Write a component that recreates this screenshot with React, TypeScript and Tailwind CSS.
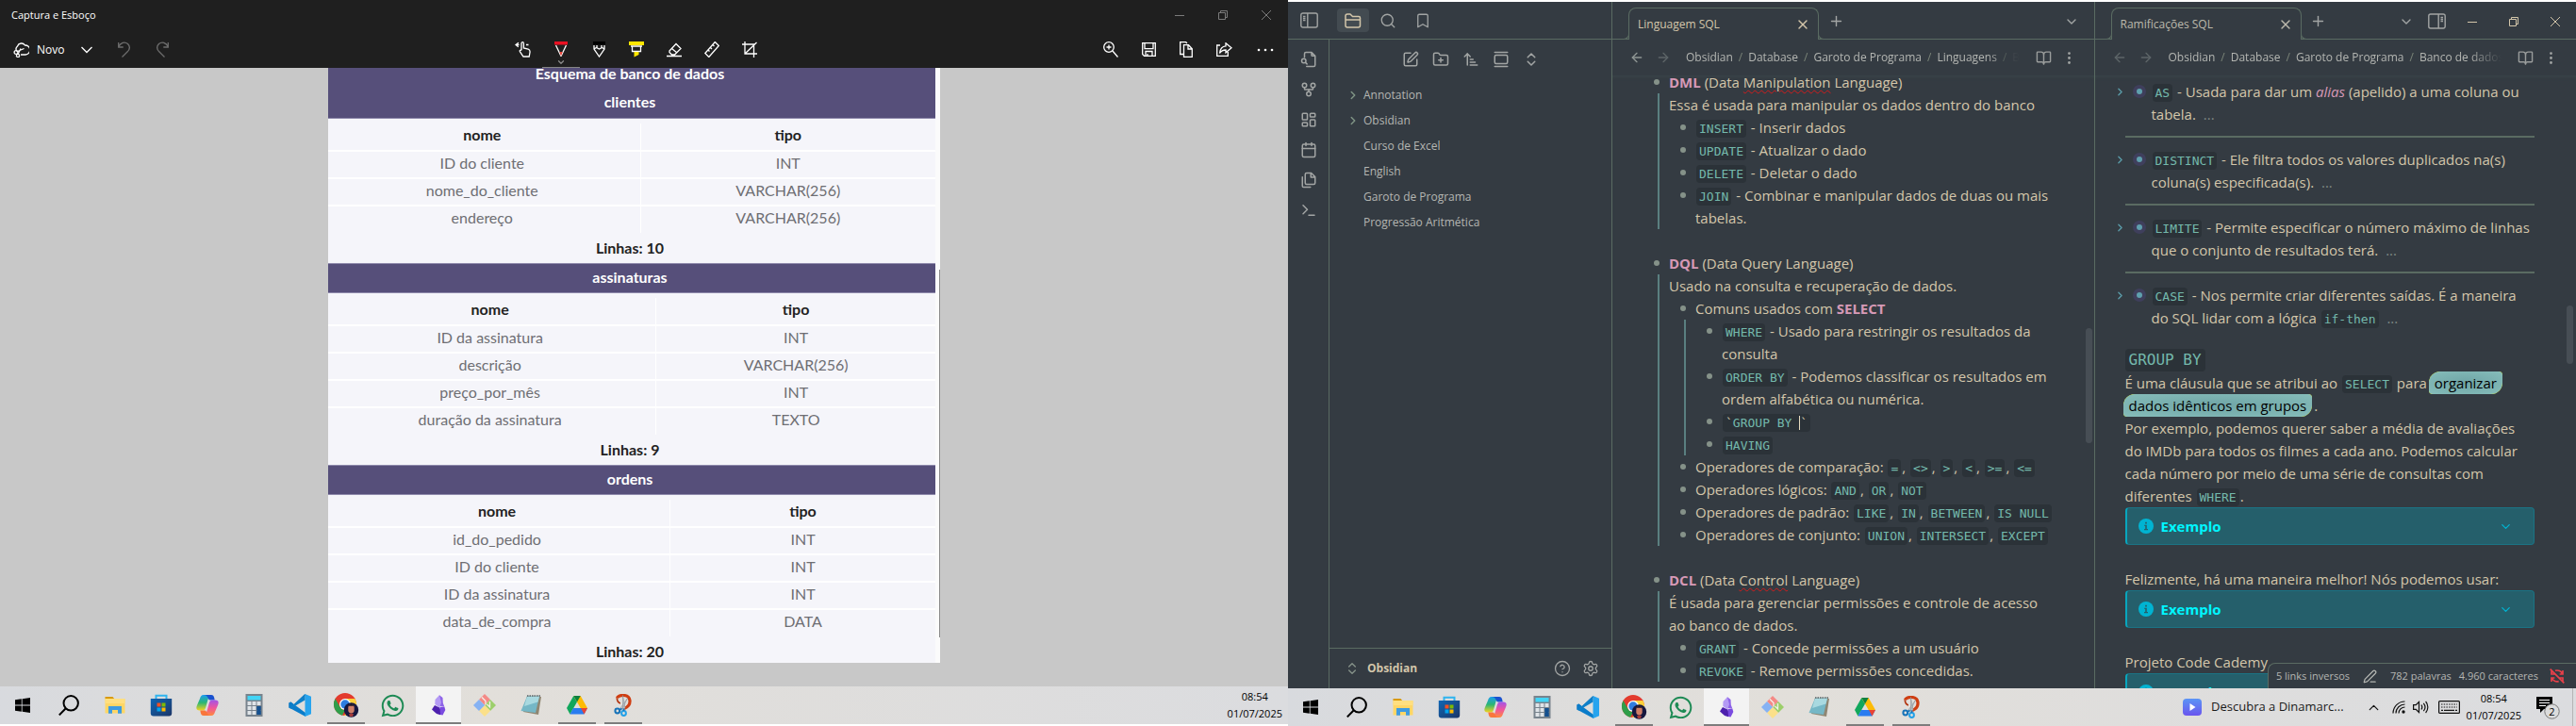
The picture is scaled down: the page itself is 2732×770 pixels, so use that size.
import React from "react";
import {
  ArrowLeft, ArrowRight, ArrowUpNarrowWide, BookOpen, Bookmark, Calendar, ChevronDown, ChevronRight, ChevronUp,
  ChevronsUpDown, CircleHelp, EllipsisVertical, FolderPlus, GalleryVertical, GitFork,
  LayoutDashboard, PenLine, Plus, Search, Settings, SquarePen, Terminal, X,
} from "lucide-react";
import { FaWhatsapp } from "react-icons/fa";

type Kids = { children?: React.ReactNode };

/* ---------- shared ---------- */

function IconButton({ label, className = "", children }: Kids & { label: string; className?: string }) {
  return (
    <button type="button" aria-label={label} className={`flex shrink-0 items-center justify-center ${className}`}>
      {children}
    </button>
  );
}

/* ---------- taskbar ---------- */

const WindowsLogo = () => (
  <svg width="16" height="16" viewBox="0 0 16 16" fill="#000">
    <path d="M0 2.3 6.8 1.3V7.6H0zM7.6 1.2 16 0V7.6H7.6zM0 8.4H6.8V14.7L0 13.7zM7.6 8.4H16V16L7.6 14.8z" />
  </svg>
);
const SearchGlyph = () => (
  <svg width="22" height="22" viewBox="0 0 22 22" fill="none" stroke="#000" strokeWidth="2">
    <circle cx="13.2" cy="8.8" r="7.7" />
    <path d="M7.8 14.2 .8 21.4" />
  </svg>
);
const Explorer = () => (
  <svg width="22" height="20" viewBox="0 0 22 20">
    <path d="M.5 1h8l2 2.500H.5z" fill="#d99a0b" />
    <path d="M.5 3h21v15.500H.5z" fill="#ffd666" />
    <path d="M.5 3h21v5H.5z" fill="#ffdf80" />
    <path d="M4 18.800V11h14v7.800h-4V15H8v3.800z" fill="#3f9be0" />
  </svg>
);
const Store = () => (
  <svg width="24" height="24" viewBox="0 0 24 24">
    <path d="M6.500 6V1.800h11V6" fill="none" stroke="#2fb4ef" strokeWidth="2" />
    <defs>
      <linearGradient id="store" x1="0" y1="0" x2="1" y2="1">
        <stop offset="0" stopColor="#0f66b5" />
        <stop offset="1" stopColor="#1d3667" />
      </linearGradient>
    </defs>
    <path d="M.8 5h22.400v15.500a3 3 0 0 1-3 3H3.800a3 3 0 0 1-3-3z" fill="url(#store)" />
    <path d="M7.500 9.500h4v4h-4z" fill="#f25022" />
    <path d="M12.500 9.500h4v4h-4z" fill="#7fba00" />
    <path d="M7.500 14.500h4v4h-4z" fill="#00a4ef" />
    <path d="M12.500 14.500h4v4h-4z" fill="#ffb900" />
  </svg>
);
const Copilot = () => (
  <svg width="24" height="22" viewBox="0 0 24 22">
    <defs>
      <linearGradient id="cpA" x1="0" y1="0" x2="0" y2="1">
        <stop offset="0" stopColor="#1b9df0" />
        <stop offset=".5" stopColor="#2bb673" />
        <stop offset="1" stopColor="#f4d31f" />
      </linearGradient>
      <linearGradient id="cpB" x1="0" y1="0" x2="0" y2="1">
        <stop offset="0" stopColor="#a154e8" />
        <stop offset=".5" stopColor="#f0569b" />
        <stop offset="1" stopColor="#ff8a3c" />
      </linearGradient>
    </defs>
    <path d="M16 0h-8C5.500 0 4.600 2 4 4L1 11c-1.500 3.500-.4 5.500 2.600 5.500H7c2 0 2.600-1.500 3.200-3.300L12.500 5c.6-2 1.400-3 3.500-3z" fill="url(#cpA)" />
    <path d="M8 0h8c2 0 2.700 1.200 3.200 3l.5 2.500h-5C12.500 5.500 13 0 8 0z" fill="#1a52cf" />
    <path d="M8 22h8c2.500 0 3.400-2 4-4l3-7c1.500-3.500.4-5.500-2.600-5.500H17c-2 0-2.600 1.500-3.200 3.300L11.500 17c-.6 2-1.400 3-3.500 3z" fill="url(#cpB)" />
    <path d="M16 22H8c-2 0-2.700-1.200-3.200-3l-.5-2.500h5C11.500 16.500 11 22 16 22z" fill="#f9763c" />
  </svg>
);
const Calc = () => (
  <svg width="19" height="24" viewBox="0 0 19 24">
    <path d="M.5 0h18v24H.5z" fill="#78838d" />
    <path d="M2.500 2h14v4.500h-14z" fill="#42d4f5" />
    {[8, 13, 18].map((y) =>
      [2.5, 7.5, 12.5].map((x) => (
        <rect key={`${x}-${y}`} x={x} y={y} width="4" height="4" fill={x > 12 && y > 12 ? "#14508f" : "#dfe4e8"} />
      )),
    )}
    <path d="M12.500 13h4v9h-4z" fill="#14508f" />
  </svg>
);
const VsCode = () => (
  <svg width="24" height="24" viewBox="0 0 24 24">
    <path d="M17.500 0 5.800 11.200 2.300 8.400.5 9.400v5.200l1.800 1L17.500 2z" fill="#0b6fb8" />
    <path d="M.5 9.400 2.300 8.400 18 20v4L.5 14.600z" fill="#0b7cc9" />
    <path d="M17.500 0 24 2.800v18.400L17.500 24z" fill="#27a4ee" />
    <path d="M17.500 0 4 12.600l-3.500 2 1.800 1L17.500 6.500z" fill="#0f80c8" />
  </svg>
);
const Chrome = () => (
  <svg width="28" height="26" viewBox="0 0 28 26">
    <circle cx="13" cy="12" r="12" fill="#e33b2e" />
    <path d="M2.600 6 8 15.400a6 6 0 0 0 5 2.600L10 23.700A12 12 0 0 1 2.600 6z" fill="#2f9e4a" />
    <path d="M13 6h10.400A12 12 0 0 1 12 24l6.200-9z" fill="#fdd13a" />
    <circle cx="13" cy="12" r="6" fill="#fff" />
    <circle cx="13" cy="12" r="4.700" fill="#2f7de0" />
    <circle cx="19.500" cy="18" r="7.700" fill="#15173f" />
    <path d="M16.300 14.500c0-3 6.400-3 6.400 0v4c0 4-6.400 4-6.400 0z" fill="#d07f68" />
    <path d="M16 15c0-4 7-4 7 0l-1-1.200h-5z" fill="#1a1424" />
    <path d="M17 22.500c1.500-1.500 3.500-1.500 5 0l-1 2.500h-3z" fill="#a33b3b" />
  </svg>
);
const ObsidianGem = () => (
  <svg width="17" height="22" viewBox="0 0 17 22">
    <path d="M9 .3 12.500 3l.3 5.500 1.500 4-4.800-.5L6 9z" fill="#8e63e8" />
    <path d="M9 .3 4.500 5 4.300 10l5 3.500L11 8z" fill="#b49af5" />
    <path d="M4 11 1 15.500l5 4.500 4 1.300c1-3 .5-5.300-.8-7.800z" fill="#4d20ae" />
    <path d="m9.500 13 4.800-.5 1 3.500-2.800 5.500-2.500-.5z" fill="#7a4be0" />
  </svg>
);
const GitBlocks = () => (
  <svg width="24" height="24" viewBox="0 0 24 24">
    <path d="m12 0 6 6-6 6-6-6z" fill="#f48a86" />
    <path d="m18 6 6 6-6 6-6-6z" fill="#9ccf6b" />
    <path d="m12 12 6 6-6 6-6-6z" fill="#fbe08a" />
    <path d="m6 6 6 6-6 6-6-6z" fill="#86b2f3" />
    <path d="m9 3.500 4 4v4M17.500 8v6l-3-3" fill="none" stroke="#f2efe9" strokeWidth="1.300" />
  </svg>
);
const Notepad = () => (
  <svg width="23" height="22" viewBox="0 0 23 22">
    <path d="m7 1 15 1-3 19-16-3z" fill="#8f8672" />
    <path d="M7 1.500h13L16 19 .5 17z" fill="#75b7c6" />
    <path d="M7 1.500h13l-1.500 6L4 12z" fill="#a9d9e0" />
    <path d="M7 1h14" stroke="#5a6266" strokeWidth="1.500" strokeDasharray="1.500 1" />
  </svg>
);
const Drive = () => (
  <svg width="22" height="20" viewBox="0 0 22 20">
    <path d="M7.300 0 0 13l3.500 6.500L11 6.500z" fill="#11a75c" />
    <path d="M7.300 0h7.400L22 13h-7.300z" fill="#fdbb05" />
    <path d="M7.300 0h7.400L11 6.500z" fill="#0c8040" />
    <path d="M7 13h15l-3.500 6.500h-15z" fill="#2a7cf0" />
    <path d="m15 13 7 0-3.500 6.500z" fill="#e94435" />
  </svg>
);
const Snip = () => (
  <svg width="20" height="24" viewBox="0 0 20 24">
    <path d="M3.500 4.500C4 1 16-1 17 7c.3 4-2 7-6 8.500" fill="none" stroke="#cf3e12" strokeWidth="3.200" />
    <path d="M3.500 4.500C3 7 5 9.500 7 10" fill="none" stroke="#b23510" strokeWidth="1.800" />
    <path d="M9.500 1.500 12 15l-2.500 1zM14.500 4.500 9 16l-2-1z" fill="#c4c9cd" stroke="#8e9498" strokeWidth=".6" />
    <circle cx="3.800" cy="18" r="2.400" fill="none" stroke="#1672b8" strokeWidth="2" />
    <circle cx="10.500" cy="20.500" r="2.400" fill="none" stroke="#22a0e8" strokeWidth="2" />
    <path d="m6 17 2.500-1.500M10.500 18v-2.500" stroke="#1672b8" strokeWidth="1.800" />
  </svg>
);

const apps: { name: string; icon: React.ReactNode; state?: "open" | "active" }[] = [
  { name: "Explorador de Arquivos", icon: <Explorer /> },
  { name: "Microsoft Store", icon: <Store /> },
  { name: "Copilot", icon: <Copilot /> },
  { name: "Calculadora", icon: <Calc /> },
  { name: "Visual Studio Code", icon: <VsCode /> },
  { name: "Google Chrome", icon: <Chrome />, state: "open" },
  { name: "WhatsApp", icon: <FaWhatsapp size={27} color="#1d8a54" /> },
  { name: "Obsidian", icon: <ObsidianGem />, state: "active" },
  { name: "Git", icon: <GitBlocks /> },
  { name: "Bloco de Notas", icon: <Notepad /> },
  { name: "Google Drive", icon: <Drive />, state: "open" },
  { name: "Captura e Esboço", icon: <Snip />, state: "open" },
];

function Clock({ className = "" }: { className?: string }) {
  return (
    <div className={`text-center text-[11px] leading-[18px] text-black ${className}`}>
      <div>08:54</div>
      <div>01/07/2025</div>
    </div>
  );
}

function Taskbar({ children }: Kids) {
  return (
    <footer className="flex h-10 shrink-0 bg-linear-to-r from-[#d8dade] via-[#e2dfda] via-38% to-[#dbdcdf]">
      <IconButton label="Iniciar" className="w-12"><WindowsLogo /></IconButton>
      <IconButton label="Pesquisar" className="w-[50px]"><SearchGlyph /></IconButton>
      <nav className="flex gap-px" aria-label="Aplicativos">
        {apps.map((a) => (
          <button
            key={a.name}
            type="button"
            aria-label={a.name}
            className={`flex w-12 flex-col items-center ${a.state === "active" ? "bg-[#f3f3f3]" : ""}`}
          >
            <span className="flex flex-1 items-center">{a.icon}</span>
            <span className={`-mt-0.5 h-0.5 ${a.state === "active" ? "w-12 bg-[#7d7d7d]" : a.state === "open" ? "w-10 bg-[#7d7d7d]" : "w-0"}`} />
          </button>
        ))}
      </nav>
      <div className="ml-auto flex items-center">{children}</div>
    </footer>
  );
}

/* ---------- capture window ---------- */

type Schema = { name: string; split: string; rows: [string, string][]; total: string };

const schemas: Schema[] = [
  {
    name: "clientes",
    split: "w-[51.4%]",
    rows: [["ID do cliente", "INT"], ["nome_do_cliente", "VARCHAR(256)"], ["endereço", "VARCHAR(256)"]],
    total: "Linhas: 10",
  },
  {
    name: "assinaturas",
    split: "w-[54%]",
    rows: [["ID da assinatura", "INT"], ["descrição", "VARCHAR(256)"], ["preço_por_mês", "INT"], ["duração da assinatura", "TEXTO"]],
    total: "Linhas: 9",
  },
  {
    name: "ordens",
    split: "w-[56.3%]",
    rows: [["id_do_pedido", "INT"], ["ID do cliente", "INT"], ["ID da assinatura", "INT"], ["data_de_compra", "DATA"]],
    total: "Linhas: 20",
  },
];

function SchemaTable({ schema }: { schema: Schema }) {
  return (
    <section>
      <h3 className="h-8 border-y border-[#8e89ab] bg-[#564f7a] pr-1 text-center font-bold leading-7 text-white">
        {schema.name}
      </h3>
      <table className="mt-[5px] w-full table-fixed border-collapse text-center">
        <thead>
          <tr className="h-[29px] border-b-2 border-white align-top text-[#222]">
            <th className={`border-r border-white py-0 pr-1 pl-0 font-bold leading-6 ${schema.split}`}>nome</th>
            <th className="p-0 font-bold leading-6">tipo</th>
          </tr>
        </thead>
        <tbody className="text-[#6e6e73]">
          {schema.rows.map(([n, t]) => (
            <tr key={n} className="h-[29px] border-b-2 border-white align-top last:border-b-0">
              <td className="border-r border-white py-0 pr-1 pl-0 leading-6">{n}</td>
              <td className="p-0 leading-6">{t}</td>
            </tr>
          ))}
        </tbody>
      </table>
      <p className="h-8 pr-1 text-center font-bold leading-8 text-[#222]">{schema.total}</p>
    </section>
  );
}

const line = { fill: "none", stroke: "#fff", strokeWidth: 1.3 } as const;

function CaptureWindow() {
  return (
    <section className="flex min-w-0 flex-1 flex-col pb-0.5">
      <header className="bg-[#1f1f1f] text-white">
        <div className="flex h-8 items-center pl-3 text-[11px]">
          <h1>Captura e Esboço</h1>
          <div className="ml-auto flex text-[#7b7b7b]">
            <IconButton label="Minimizar" className="w-[46px]">
              <svg width="10" height="10" stroke="currentColor"><path d="M0 5.500h10" /></svg>
            </IconButton>
            <IconButton label="Restaurar" className="w-[46px]">
              <svg width="10" height="10" fill="none" stroke="currentColor"><path d="M.5 2.500h7v7h-7zM2.500 2.500v-2h7v7h-2" /></svg>
            </IconButton>
            <IconButton label="Fechar" className="w-[46px]">
              <svg width="10" height="10" stroke="currentColor"><path d="m0 0 10 10M10 0 0 10" /></svg>
            </IconButton>
          </div>
        </div>
        <div className="grid h-10 grid-cols-[1fr_auto_1fr] items-stretch">
          <div className="flex items-center">
            <button type="button" className="flex items-center gap-2 pl-3.5 text-[12px]">
              <svg width="17" height="17" viewBox="0 0 17 17" {...line}>
                <path d="M4 10.500A4 4 0 0 1 4.500 5a4.500 4.500 0 0 1 8-1 5 5 0 0 1 .5 10H8" />
                <circle cx="3" cy="11.500" r="1.900" /><circle cx="5" cy="15" r="1.600" /><path d="m4.500 10.500 7-3M5 13.500l3-6" />
              </svg>
              Novo
            </button>
            <IconButton label="Mais opções de captura" className="w-12">
              <svg width="12" height="8" {...line}><path d="m.5 1 5.500 5.500L11.500 1" /></svg>
            </IconButton>
            <IconButton label="Desfazer" className="w-8">
              <svg width="14" height="17" fill="none" stroke="#6d6d6d" strokeWidth="1.300"><path d="M.7 1v5h5M.7 5.500C3 1.500 7-.5 10.500 2.500c3 3 2 6-.5 8.500l-5.500 5.500" /></svg>
            </IconButton>
            <IconButton label="Refazer" className="w-12">
              <svg width="14" height="17" fill="none" stroke="#6d6d6d" strokeWidth="1.300"><path d="M13.300 1v5h-5M13.300 5.500C11 1.500 7-.5 3.500 2.500c-3 3-2 6 .5 8.500l5.500 5.500" /></svg>
            </IconButton>
          </div>
          <div className="mr-4 flex">
            <IconButton label="Escrita por toque" className="w-10">
              <svg width="18" height="17" viewBox="0 0 18 17" {...line}><path d="M7 9V2.200c0-2 2.400-2 2.400 0V7l4.800 1.200c2 .6 2 1.800 1.800 3.300l-.8 4.500H9L5.500 10.800c-.8-1.300.7-2.300 1.700-1.300M4 1.200 1 3.500l2.800 2.300M1 3.500h3.500M12 3.500h2.500" /></svg>
            </IconButton>
            <button type="button" aria-label="Caneta esferográfica" className="flex w-10 flex-col items-center border-b-2 border-[#858585] pt-3">
              <svg width="14" height="16" viewBox="0 0 14 16"><path d="M0 0h14v3.500H0z" fill="#e81123" /><path d="M1.500 4 7 15.500 12.500 4" {...line} /><path d="M5.300 11h3.400L7 15.500z" fill="#e8443a" /></svg>
              <ChevronDown size={10} strokeWidth={3} color="#8d8d8d" className="mt-px" />
            </button>
            <IconButton label="Lápis" className="w-10">
              <svg width="13" height="17" viewBox="0 0 13 17"><path d="M0 0h13v3.500H0z" fill="#000" /><path d="M1 4v4l5.500 8L12 8V4M1 8l2.500-1.500L6.500 8l3-1.500L12 8M4 4v2.500M9 4v2.500" {...line} /></svg>
            </IconButton>
            <IconButton label="Marca-texto" className="w-10">
              <svg width="16" height="17" viewBox="0 0 16 17"><path d="M0 0h16v4H0z" fill="#ffe600" /><path d="M2 5h12M3.500 5v5.500h9V5" {...line} /><path d="M5.500 11h5v3l-5 2.500z" fill="#ffe600" /></svg>
            </IconButton>
            <IconButton label="Borracha" className="w-10">
              <svg width="16" height="16" viewBox="0 0 16 16" {...line}><path d="m3 9 7-7.500 5 5L8.500 13H5.500L3 10.500zM5.500 6.500 11 11M0 14.500h16" /></svg>
            </IconButton>
            <IconButton label="Régua" className="w-10">
              <svg width="16" height="17" viewBox="0 0 16 17" {...line}><path d="m.8 12.500 10.500-12 4 4-10.500 12zM4 9l1.500 1.500M6.500 6.500 8 8M9 3.500 10.500 5" /></svg>
            </IconButton>
            <IconButton label="Cortar imagem" className="w-10">
              <svg width="16" height="17" viewBox="0 0 16 17" {...line}><path d="M3 0v13h13M0 3h12.500v14M3 13 15.500 1" /></svg>
            </IconButton>
          </div>
          <div className="flex justify-end">
            <IconButton label="Zoom" className="w-10">
              <svg width="16" height="17" viewBox="0 0 16 17" {...line}><circle cx="6" cy="6" r="5.300" /><path d="m10 10 5.500 6.500M3.500 6h5M6 3.500v5" /></svg>
            </IconButton>
            <IconButton label="Salvar" className="w-10">
              <svg width="15" height="15" viewBox="0 0 15 15" {...line}><path d="M.7.7h13.600v13.600H2.500L.7 12.500zM3 .7v6h9v-6M4 14v-4.500h7V14M6 12v2" /></svg>
            </IconButton>
            <IconButton label="Copiar" className="w-10">
              <svg width="14" height="17" viewBox="0 0 14 17" {...line}><path d="M4 13.500H.7V.7h6L8 2M4.500 3.700h5l3.800 4v8.600H4.500zM9 4v4h4" /></svg>
            </IconButton>
            <IconButton label="Compartilhar" className="w-10">
              <svg width="17" height="15" viewBox="0 0 17 15" {...line}><path d="M4 3H.7v11.300h11.600V10M10 .8l6 5-6 5V8C7 8 5 9 3.500 11.500 4 7 6 4 10 3.800z" /></svg>
            </IconButton>
            <IconButton label="Mais" className="w-12">
              <svg width="18" height="4" fill="#fff"><circle cx="2" cy="2" r="1.300" /><circle cx="9" cy="2" r="1.300" /><circle cx="16" cy="2" r="1.300" /></svg>
            </IconButton>
          </div>
        </div>
      </header>

      <main className="flex flex-1 justify-center bg-[#c8c8c8] pb-[25px] pr-[21px]">
        <div className="flex h-[631px] w-[649px] overflow-hidden bg-white">
          <div className="min-w-0 flex-1 bg-[#f5f5fa] font-['Lato',sans-serif] text-[16px]">
            <h2 className="h-[22px] bg-[#564f7a] pr-1 text-center font-bold leading-3 text-white">Esquema de banco de dados</h2>
            <div className="[&>section:first-child>h3]:border-t-0">
              {schemas.map((s) => <SchemaTable key={s.name} schema={s} />)}
            </div>
          </div>
          <div className="flex w-[5px] justify-end bg-[#fbfbfb] pt-[214px]">
            <div className="h-[390px] w-px bg-[#8a8a8a]" />
          </div>
        </div>
      </main>

      <Taskbar><Clock className="mr-1.5" /></Taskbar>
    </section>
  );
}

/* ---------- notes window ---------- */

const PanelIcon = ({ right = false }: { right?: boolean }) => (
  <svg width="19" height="17" viewBox="0 0 19 17" fill="none" stroke="currentColor" strokeWidth="1.400" className={right ? "-scale-x-100" : ""}>
    <rect x=".8" y="1" width="17.400" height="15" rx="2" />
    <path d="M7.800 1v15M3 4.500h2.500M3 6.500h2.500M3 8.500h2.500" />
  </svg>
);
const FileSearchIcon = () => (
  <svg width="18" height="18" viewBox="0 0 24 24" fill="none" stroke="currentColor" strokeWidth="2" strokeLinecap="round" strokeLinejoin="round">
    <path d="M6 9V4a2 2 0 0 1 2-2h8l5 5v13a2 2 0 0 1-2 2H9M16 2v4a1 1 0 0 0 1 1h4" />
    <circle cx="5" cy="14" r="3" /><path d="m7.500 16.500 2 2" />
  </svg>
);

function Code({ children }: Kids) {
  return (
    <code className="mx-px rounded bg-[#2b3238] px-[3px] py-0.5 font-['DejaVu_Sans_Mono',monospace] text-[13px] leading-4 text-[#74b9ac]">
      {children}
    </code>
  );
}
const Strong = ({ children }: Kids) => <strong className="font-bold text-[#d699b6]">{children}</strong>;
const Misspelt = ({ children }: Kids) => (
  <span className="underline decoration-[#d01c1c] decoration-wavy decoration-1 underline-offset-2">{children}</span>
);

function Bullet({ children }: Kids) {
  return (
    <div className="flex">
      <span className="mt-[9px] mr-2.5 ml-[-16px] size-1.5 shrink-0 rounded-full bg-[#859289]" />
      <div className="min-w-0 flex-1">{children}</div>
    </div>
  );
}
function Guide({ children }: Kids) {
  return <div className="ml-[-12px] border-l-2 border-[#5a7f80] pl-2.5">{children}</div>;
}
const Level = ({ children }: Kids) => <div className="pl-7">{children}</div>;

function Pane({ title, crumbs, active, controls, children }: Kids & { title: string; crumbs: string[]; active?: boolean; controls?: boolean }) {
  return (
    <section className="relative flex min-w-0 flex-1 flex-col border-l border-[#5a6b62]">
      <div className="flex h-10 shrink-0 border-b border-[#5a6b62] pt-1.5 pl-[17px]">
        <div className={`relative -mb-px flex w-[202px] items-center justify-between rounded-t-lg border border-b-0 border-[#5a6b62] bg-[#343b42] pr-2 pl-[9px] text-[12px] ${active ? "text-[#d3c6aa]" : "text-[#bcb9ac]"}`}>
          <span className="absolute bottom-0 -left-1.5 size-1.5 rounded-br-md border-r border-b border-[#5a6b62] bg-[#343b42]" />
          <span className="absolute -right-1.5 bottom-0 size-1.5 rounded-bl-md border-b border-l border-[#5a6b62] bg-[#343b42]" />
          {title}
          <IconButton label="Fechar aba"><X size={16} /></IconButton>
        </div>
        <IconButton label="Nova aba" className="w-9 pb-1 text-[#a2a5a4]"><Plus size={17} /></IconButton>
        <div className="ml-auto flex pb-1 text-[#a2a5a4]">
          <IconButton label="Lista de abas" className={controls ? "w-8" : "mr-2 w-8"}><ChevronDown size={16} /></IconButton>
          {controls && (
            <>
              <IconButton label="Alternar painel direito" className="w-8"><PanelIcon right /></IconButton>
              <div className="flex text-[#d3c6aa]">
                <IconButton label="Minimizar janela" className="w-11">
                  <svg width="10" height="10" stroke="currentColor"><path d="M0 5.500h10" /></svg>
                </IconButton>
                <IconButton label="Restaurar janela" className="w-11">
                  <svg width="10" height="10" fill="none" stroke="currentColor"><path d="M.5 2.500h7v7h-7zM2.500 2.500v-2h7v7h-2" /></svg>
                </IconButton>
                <IconButton label="Fechar janela" className="w-11">
                  <svg width="10" height="10" stroke="currentColor"><path d="m0 0 10 10M10 0 0 10" /></svg>
                </IconButton>
              </div>
            </>
          )}
        </div>
      </div>
      <div className="flex h-[38px] shrink-0 items-center pr-[18px] pl-[18px] text-[12px] text-[#b4b6b2]">
        <IconButton label="Voltar" className={active ? "text-[#8f9694]" : "text-[#5d6568]"}><ArrowLeft size={16} /></IconButton>
        <IconButton label="Avançar" className="ml-3 text-[#5d6568]"><ArrowRight size={16} /></IconButton>
        <nav aria-label="Caminho" className="ml-4 flex min-w-0 flex-1 gap-1.5 overflow-hidden whitespace-nowrap mask-r-from-90%">
          {crumbs.map((c, i) => (
            <React.Fragment key={c}>
              {i > 0 && <span className="text-[#7a8478]">/</span>}
              <a href="#" className={i > 3 ? "opacity-50" : ""}>{c}</a>
            </React.Fragment>
          ))}
        </nav>
        <IconButton label="Modo de leitura" className="ml-[17px] text-[#9a9d9c]"><BookOpen size={17} /></IconButton>
        <IconButton label="Mais opções" className="ml-2.5 text-[#a2a5a4]"><EllipsisVertical size={17} /></IconButton>
      </div>
      {children}
    </section>
  );
}

function Fold({ children }: Kids) {
  return (
    <div className="flex">
      <IconButton label="Expandir" className="mt-[5px] -ml-3 size-3.5 self-start text-[#5b9aa8]"><ChevronRight size={13} strokeWidth={2.5} /></IconButton>
      <span className="mx-1.5 mt-[5px] flex size-3.5 shrink-0 items-center justify-center rounded-full bg-[#3f3f5c]">
        <span className="size-1.5 rounded-full bg-[#5fa0ae]" />
      </span>
      <p className="min-w-0 flex-1">
        {children} <span className="ml-1 text-[#7f8984]">...</span>
      </p>
    </div>
  );
}
const Rule = () => <hr className="my-[11px] border-t-2 border-[#5a6b62]" />;

function Callout() {
  return (
    <button type="button" className="flex h-10 w-full items-center rounded border border-l-2 border-[#1b7384] border-l-[#08a6be] bg-[#255f6b] pr-[22px] pl-3 text-left font-bold text-[#00f6ff]">
      <svg width="16" height="16" viewBox="0 0 16 16"><circle cx="8" cy="8" r="8" fill="#00b4d2" /><path d="M6.300 6.700h2.500V11h1.200v1.200H6V11h1.200V7.900h-.9zM7.100 3.700h1.800v1.800H7.100z" fill="#255f6b" /></svg>
      <span className="ml-2">Exemplo</span>
      <ChevronDown size={15} className="ml-auto" color="#00b4d2" />
    </button>
  );
}

const files: { name: string; folder?: boolean }[] = [
  { name: "Annotation", folder: true },
  { name: "Obsidian", folder: true },
  { name: "Curso de Excel" },
  { name: "English" },
  { name: "Garoto de Programa" },
  { name: "Progressão Aritmética" },
];

function Sidebar() {
  return (
    <aside className="flex w-[343px] shrink-0 flex-col text-[#a2a5a4]">
      <div className="flex h-10 shrink-0 items-center border-b border-[#5a6b62] pl-[13px]">
        <IconButton label="Alternar painel esquerdo" className="mr-5"><PanelIcon /></IconButton>
        <div className="flex gap-[3px]">
          <IconButton label="Arquivos" className="h-[25px] w-[34px] rounded bg-[#434b51] text-[#d3c6aa]"><FolderIcon /></IconButton>
          <IconButton label="Busca" className="h-[25px] w-[34px]"><Search size={18} strokeWidth={1.75} /></IconButton>
          <IconButton label="Favoritos" className="h-[25px] w-[34px]"><Bookmark size={18} strokeWidth={1.75} /></IconButton>
        </div>
      </div>
      <div className="flex min-h-0 flex-1">
        <nav aria-label="Ações" className="flex w-11 shrink-0 flex-col items-center gap-3.5 border-r border-[#5a6b62] pt-3">
          <IconButton label="Busca rápida"><FileSearchIcon /></IconButton>
          <IconButton label="Grafo"><GitFork size={18} /></IconButton>
          <IconButton label="Canvas"><LayoutDashboard size={18} /></IconButton>
          <IconButton label="Nota diária"><Calendar size={18} /></IconButton>
          <IconButton label="Modelos"><FilesIcon /></IconButton>
          <IconButton label="Paleta de comandos"><Terminal size={18} /></IconButton>
        </nav>
        <div className="flex min-w-0 flex-1 flex-col">
          <div className="flex justify-center gap-3.5 pt-3">
            <IconButton label="Nova nota"><SquarePen size={18} /></IconButton>
            <IconButton label="Nova pasta"><FolderPlus size={18} /></IconButton>
            <IconButton label="Ordenar"><ArrowUpNarrowWide size={18} /></IconButton>
            <IconButton label="Revelar arquivo"><GalleryVertical size={18} /></IconButton>
            <IconButton label="Recolher tudo"><ChevronsUpDown size={18} /></IconButton>
          </div>
          <ul className="mt-[15px] flex-1 pl-[18px] text-[12px] text-[#b4b6b2]">
            {files.map((f) => (
              <li key={f.name}>
                <button type="button" className="flex h-[27px] items-center gap-1">
                  <span className="flex w-3.5 justify-center text-[#7f9485]">{f.folder && <ChevronRight size={14} strokeWidth={2.5} />}</span>
                  {f.name}
                </button>
              </li>
            ))}
          </ul>
          <div className="flex h-[43px] items-center border-t border-[#5a6b62] pr-[13px] pl-4">
            <button type="button" className="flex items-center gap-2 text-[12px] font-bold text-[#d3c6aa]">
              <ChevronsUpDown size={16} color="#859289" /> Obsidian
            </button>
            <IconButton label="Ajuda" className="ml-auto"><CircleHelp size={18} strokeWidth={1.75} /></IconButton>
            <IconButton label="Configurações" className="ml-3"><Settings size={18} strokeWidth={1.75} /></IconButton>
          </div>
        </div>
      </div>
    </aside>
  );
}

function FolderIcon() {
  return (
    <svg width="18" height="16" viewBox="0 0 18 16" fill="none" stroke="currentColor" strokeWidth="1.500" strokeLinejoin="round">
      <path d="M1 13V3a2 2 0 0 1 2-2h3l2.500 2.500H15a1.500 1.500 0 0 1 1.500 1.500v8a2 2 0 0 1-2 2H3a2 2 0 0 1-2-2zM1 7h15.500" />
    </svg>
  );
}
function FilesIcon() {
  return (
    <svg width="18" height="18" viewBox="0 0 24 24" fill="none" stroke="currentColor" strokeWidth="2" strokeLinejoin="round" strokeLinecap="round">
      <path d="M15.500 2H9a2 2 0 0 0-2 2v12c0 1.100.9 2 2 2h10a2 2 0 0 0 2-2V7.500zM15 2v6h6M3 7.600v12.800A1.600 1.600 0 0 0 4.600 22h9.800" />
    </svg>
  );
}

function NotesWindow() {
  return (
    <section className="flex min-w-0 flex-1 flex-col pt-0.5">
      <div className="relative flex h-[728px] bg-[#343b42]">
        <Sidebar />
        <Pane title="Linguagem SQL" crumbs={["Obsidian", "Database", "Garoto de Programa", "Linguagens", "Banco"]} active>
          <article className="relative h-0 flex-1 overflow-hidden pr-11 pl-[60px] text-[15px] leading-6 text-[#d3c6aa] shadow-[inset_0_3px_4px_-2px_#3c484b]">
            <div className="mt-[-5px]">
              <Bullet><Strong>DML</Strong> (Data <Misspelt>Manipulation</Misspelt> Language)</Bullet>
              <Guide>
                <p>Essa é usada para manipular os dados dentro do banco</p>
                <Level>
                  <Bullet><Code>INSERT</Code> - Inserir dados</Bullet>
                  <Bullet><Code>UPDATE</Code> - Atualizar o dado</Bullet>
                  <Bullet><Code>DELETE</Code> - Deletar o dado</Bullet>
                  <Bullet><Code>JOIN</Code> - Combinar e manipular dados de duas ou mais tabelas.</Bullet>
                </Level>
              </Guide>
              <div className="mt-6"><Bullet><Strong>DQL</Strong> (Data Query Language)</Bullet></div>
              <Guide>
                <p>Usado na consulta e recuperação de dados.</p>
                <Level>
                  <Bullet>Comuns usados com <Strong>SELECT</Strong></Bullet>
                  <Guide>
                    <Level>
                      <Bullet><Code>WHERE</Code> - Usado para restringir os resultados da consulta</Bullet>
                      <Bullet><Code>ORDER BY</Code> - Podemos classificar os resultados em ordem alfabética ou numérica.</Bullet>
                      <Bullet>
                        <Code>
                          <span className="text-[#d3c6aa]">`</span>GROUP BY{" "}
                          <span className="border-l border-[#e8dcc0] text-[#d3c6aa]">`</span>
                        </Code>
                      </Bullet>
                      <Bullet><Code>HAVING</Code></Bullet>
                    </Level>
                  </Guide>
                  <Bullet>Operadores de comparação: <Code>=</Code>, <Code>&lt;&gt;</Code>, <Code>&gt;</Code>, <Code>&lt;</Code>, <Code>&gt;=</Code>, <Code>&lt;=</Code></Bullet>
                  <Bullet>Operadores lógicos: <Code>AND</Code>, <Code>OR</Code>, <Code>NOT</Code></Bullet>
                  <Bullet><span className="whitespace-nowrap">Operadores de padrão: <Code>LIKE</Code>, <Code>IN</Code>, <Code>BETWEEN</Code>, <Code>IS NULL</Code></span></Bullet>
                  <Bullet><span className="whitespace-nowrap">Operadores de conjunto: <Code>UNION</Code>, <Code>INTERSECT</Code>, <Code>EXCEPT</Code></span></Bullet>
                </Level>
              </Guide>
              <div className="mt-6"><Bullet><Strong>DCL</Strong> (Data <Misspelt>Control</Misspelt> Language)</Bullet></div>
              <Guide>
                <p>É usada para gerenciar permissões e controle de acesso<br />ao banco de dados.</p>
                <Level>
                  <Bullet><Code>GRANT</Code> - Concede permissões a um usuário</Bullet>
                  <Bullet><Code>REVOKE</Code> - Remove permissões concedidas.</Bullet>
                </Level>
              </Guide>
            </div>
            <span className="absolute top-[268px] right-0.5 h-[122px] w-[7px] rounded bg-[#474e55]" />
          </article>
        </Pane>

        <Pane title="Ramificações SQL" crumbs={["Obsidian", "Database", "Garoto de Programa", "Banco de dados"]} controls>
          <article className="relative h-0 flex-1 overflow-hidden pt-[5px] pr-11 pl-8 text-[15px] leading-6 text-[#d3c6aa] shadow-[inset_0_3px_4px_-2px_#3c484b]">
            <Fold><Code>AS</Code> - Usada para dar um <em className="text-[#d699b6]">alias</em> (apelido) a uma coluna ou tabela.</Fold>
            <Rule />
            <Fold><Code>DISTINCT</Code> - Ele filtra todos os valores duplicados na(s) coluna(s) especificada(s).</Fold>
            <Rule />
            <Fold><Code>LIMITE</Code> - Permite especificar o número máximo de linhas que o conjunto de resultados terá.</Fold>
            <Rule />
            <Fold><Code>CASE</Code> - Nos permite criar diferentes saídas. É a maneira do SQL lidar com a lógica <Code>if-then</Code></Fold>
            <h2 className="mt-[21px] flex">
              <code className="rounded bg-[#2b3238] px-1 font-['DejaVu_Sans_Mono',monospace] text-base leading-6 text-[#74b9ac]">GROUP BY</code>
            </h2>
            <p>
              É uma cláusula que se atribui ao <Code>SELECT</Code> para{" "}
              <mark className="-mx-0.5 rounded-tl-xl rounded-tr rounded-br-xl rounded-bl box-decoration-clone bg-radial from-[#6fa5a6] to-[#86bdba] px-1.5 py-0.5 text-black">organizar dados idênticos em grupos</mark> .
            </p>
            <p>
              Por exemplo, podemos querer saber a média de avaliações do IMDb para todos os filmes a cada ano. Podemos
              calcular cada número por meio de uma série de consultas com diferentes <Code>WHERE</Code>.
            </p>
            <Callout />
            <p className="mt-6">Felizmente, há uma maneira melhor! Nós podemos usar:</p>
            <Callout />
            <p className="mt-6">Projeto Code Cademy</p>
            <Callout />
            <span className="absolute top-[244px] right-[3px] h-[62px] w-[7px] rounded bg-[#474e55]" />
          </article>
        </Pane>

        <div className="absolute right-0 bottom-0 flex h-[27px] items-center rounded-tl-lg border-t border-l border-[#5a6b62] bg-[#343b42] pr-3 pl-2 text-[11px] text-[#b4b6b2]">
          <span>5 links inversos</span>
          <PenLine size={15} className="mx-3.5" />
          <span>782 palavras</span>
          <span className="ml-2">4.960 caracteres</span>
          <svg width="16" height="16" viewBox="0 0 24 24" fill="none" stroke="#e8404a" strokeWidth="2.500" className="ml-3" aria-label="Sincronização desativada">
            <path d="M3 3v6h6M21 21v-6h-6M3.500 15a9 9 0 0 0 11 5.500M20.500 9A9 9 0 0 0 9 3.500M21 3v6h-5M3 21v-6h5M1 1l22 22" />
          </svg>
        </div>
      </div>

      <Taskbar>
        <button type="button" className="flex items-center gap-2.5 text-[13px] text-[#1a1a1a]">
          <svg width="20" height="18" viewBox="0 0 20 18">
            <defs><linearGradient id="play" x1="0" y1="0" x2="0" y2="1"><stop offset="0" stopColor="#5b95f5" /><stop offset="1" stopColor="#6a55ee" /></linearGradient></defs>
            <rect width="20" height="18" rx="4" fill="url(#play)" />
            <path d="M7.500 5v8l6-4z" fill="#fff" />
          </svg>
          Descubra a Dinamarc...
        </button>
        <IconButton label="Mostrar ícones ocultos" className="ml-[22px] w-5"><ChevronUp size={17} color="#111" strokeWidth={1.75} /></IconButton>
        <IconButton label="Rede" className="ml-1 w-6">
          <svg width="14" height="14" viewBox="0 0 14 14" fill="none" stroke="#111" strokeWidth="1.200"><path d="M1 13.500A12.500 12.500 0 0 1 13.500 1M4 13.500A9.500 9.500 0 0 1 13.500 4M7 13.500A6.500 6.500 0 0 1 13.500 7" /><circle cx="12" cy="12" r="1.700" fill="#111" stroke="none" /></svg>
        </IconButton>
        <IconButton label="Volume" className="w-6">
          <svg width="17" height="14" viewBox="0 0 17 14" fill="none" stroke="#111" strokeWidth="1.200"><path d="M.6 4.700h2.600L6.500 1.500v11L3.200 9.300H.6zM9 4.500c1 1.500 1 3.500 0 5M11.300 2.800c2 2.500 2 6 0 8.400M13.600 1c3 3.500 3 8.500 0 12" /></svg>
        </IconButton>
        <IconButton label="Teclado virtual" className="ml-1 w-7">
          <svg width="23" height="14" viewBox="0 0 23 14" fill="none" stroke="#111" strokeWidth="1.200"><rect x=".6" y=".6" width="21.800" height="12.800" rx="1" /><path d="M3 4h17M3 7h17" strokeDasharray="1.500 1.200" /><path d="M3 10.300h2M6 10.300h11M18 10.300h2" /></svg>
        </IconButton>
        <Clock className="mr-2 ml-1" />
        <IconButton label="Notificações" className="mr-2.5 ml-1 w-8">
          <svg width="26" height="26" viewBox="0 0 26 26">
            <path d="M1 2h17v13H9l-4 4v-4H1z" fill="#000" />
            <path d="M4 5.500h11M4 8.500h11M4 11.500h7" stroke="#fff" strokeWidth="1.200" />
            <circle cx="17.500" cy="17.500" r="7.700" fill="#dcdcdc" stroke="#777" />
            <text x="17.500" y="21.500" textAnchor="middle" fontSize="11" fill="#000">2</text>
          </svg>
        </IconButton>
        <span className="mr-[3px] h-10 w-px bg-[#b5b5b5]" />
      </Taskbar>
    </section>
  );
}

export default function App() {
  return (
    <div className="flex bg-white font-['Open_Sans','Noto_Sans',sans-serif]">
      <CaptureWindow />
      <NotesWindow />
    </div>
  );
}
